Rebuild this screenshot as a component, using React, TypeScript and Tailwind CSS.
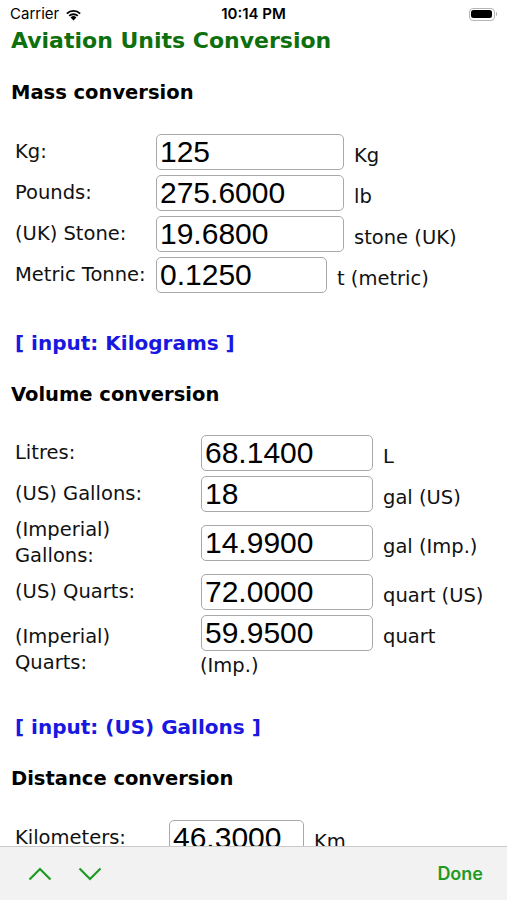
import React from 'react';

const labelFont = { fontFamily: '"DejaVu Sans", Verdana, sans-serif' };

type Row = {
  label: React.ReactNode;
  value: string;
  unit: React.ReactNode;
  inputW: string;
};

const Field = ({ value, w }: { value: string; w: string }) => (
  <input
    readOnly
    value={value}
    className={`${w} h-[36px] rounded-[5px] border border-[#a9a9a9] bg-white px-[3px] text-[30px] leading-[34px] text-black outline-none`}
    style={{ fontFamily: '"Liberation Sans", Arial, sans-serif' }}
  />
);

const Section = ({
  title,
  labelW,
  rows,
}: {
  title: string;
  labelW: string;
  rows: Row[];
}) => (
  <div>
    <h2 className="mt-[26px] text-[19.5px] font-bold leading-[26px] text-black">{title}</h2>
    <div className="mt-[28px] flex flex-col gap-[5px]">
      {rows.map((r, i) => (
        <div key={i} className="flex items-center">
          <div className={`${labelW} shrink-0 pl-[4px] text-[19.5px] leading-[26px] text-[#111]`}>
            {r.label}
          </div>
          <div className="flex items-baseline">
            <Field value={r.value} w={r.inputW} />
            <span className="ml-[10px] text-[19.5px] leading-[26px] text-[#111]">{r.unit}</span>
          </div>
        </div>
      ))}
    </div>
  </div>
);

const WifiIcon = () => (
  <svg width="17" height="13" viewBox="0 0 17 13">
    <path d="M8.5 12.5 L5.6 9.4 A4.2 4.2 0 0 1 11.4 9.4 Z" fill="#000" />
    <path d="M3.6 7.3 A7 7 0 0 1 13.4 7.3 L12.1 8.6 A5.2 5.2 0 0 0 4.9 8.6 Z" fill="#000" />
    <path d="M1.2 4.9 A10.4 10.4 0 0 1 15.8 4.9 L14.5 6.2 A8.6 8.6 0 0 0 2.5 6.2 Z" fill="#000" />
  </svg>
);

export default function App() {
  return (
    <div className="relative min-h-[900px] w-[507px] bg-white" style={labelFont}>
      {/* status bar */}
      <div
        className="flex h-[28px] items-center justify-between px-[10px] text-[15px] text-black"
        style={{ fontFamily: 'Inter, "Liberation Sans", sans-serif' }}
      >
        <div className="flex w-[120px] items-center gap-[6px]">
          <span>Carrier</span>
          <WifiIcon />
        </div>
        <span className="font-semibold">10:14 PM</span>
        <div className="flex w-[120px] justify-end">
          <div className="flex items-center">
            <div className="flex h-[13px] w-[26px] items-center rounded-[4px] border border-[#b5b5b5] p-[1.5px]">
              <div className="h-full w-full rounded-[2.5px] bg-black" />
            </div>
            <div className="ml-[1px] h-[4px] w-[1.5px] rounded-r-sm bg-[#b5b5b5]" />
          </div>
        </div>
      </div>

      <div className="px-[11px] pb-[80px]">
        <h1 className="text-[22px] font-bold leading-[26px] text-[#0d700d]">
          Aviation Units Conversion
        </h1>

        <Section
          title="Mass conversion"
          labelW="w-[145px]"
          rows={[
            { label: 'Kg:', value: '125', unit: 'Kg', inputW: 'w-[188px]' },
            { label: 'Pounds:', value: '275.6000', unit: 'lb', inputW: 'w-[188px]' },
            { label: '(UK) Stone:', value: '19.6800', unit: 'stone (UK)', inputW: 'w-[188px]' },
            { label: 'Metric Tonne:', value: '0.1250', unit: 't (metric)', inputW: 'w-[171px]' },
          ]}
        />

        <p className="mt-[37px] pl-[4px] text-[20px] font-bold leading-[26px] text-[#1818e0]">
          [ input: Kilograms ]
        </p>

        <div>
          <h2 className="mt-[26px] text-[19.5px] font-bold leading-[26px] text-black">
            Volume conversion
          </h2>
          <div className="mt-[27px] flex flex-col gap-[5px] text-[19.5px] leading-[26px] text-[#111]">
            <div className="flex items-center">
              <div className="w-[190px] shrink-0 pl-[4px]">Litres:</div>
              <div className="flex items-baseline">
                <Field value="68.1400" w="w-[172px]" />
                <span className="ml-[10px]">L</span>
              </div>
            </div>
            <div className="flex items-center">
              <div className="w-[190px] shrink-0 pl-[4px]">(US) Gallons:</div>
              <div className="flex items-baseline">
                <Field value="18" w="w-[172px]" />
                <span className="ml-[10px]">gal (US)</span>
              </div>
            </div>
            <div className="flex items-center">
              <div className="w-[190px] shrink-0 pl-[4px]">
                (Imperial)
                <br />
                Gallons:
              </div>
              <div className="flex items-baseline">
                <Field value="14.9900" w="w-[172px]" />
                <span className="ml-[10px]">gal (Imp.)</span>
              </div>
            </div>
            <div className="flex items-center">
              <div className="w-[190px] shrink-0 pl-[4px]">(US) Quarts:</div>
              <div className="flex items-baseline">
                <Field value="72.0000" w="w-[172px]" />
                <span className="ml-[10px]">quart (US)</span>
              </div>
            </div>
            <div className="flex items-start">
              <div className="mt-[9px] w-[189px] shrink-0 pl-[4px]">
                (Imperial)
                <br />
                Quarts:
              </div>
              <div className="flex flex-col">
                <div className="flex items-baseline pl-[1px]">
                  <Field value="59.9500" w="w-[172px]" />
                  <span className="ml-[10px]">quart</span>
                </div>
                <span className="mt-[2px]">(Imp.)</span>
              </div>
            </div>
          </div>
        </div>

        <p className="mt-[35px] pl-[4px] text-[20px] font-bold leading-[26px] text-[#1818e0]">
          [ input: (US) Gallons ]
        </p>

        <Section
          title="Distance conversion"
          labelW="w-[158px]"
          rows={[
            { label: 'Kilometers:', value: '46.3000', unit: 'Km', inputW: 'w-[135px]' },
            { label: 'Nautical Miles:', value: '25.0000', unit: 'NM', inputW: 'w-[135px]' },
          ]}
        />
      </div>

      {/* keyboard accessory toolbar */}
      <div
        className="fixed bottom-0 left-0 flex h-[54px] w-[507px] items-center justify-between border-t border-[#c9c9c9] bg-[#f2f2f2] pl-[28px] pr-[24px]"
        style={{ fontFamily: 'Inter, "Liberation Sans", sans-serif' }}
      >
        <div className="flex items-center gap-[26px]">
          <svg width="24" height="14" viewBox="0 0 24 14">
            <path d="M1.5 12.5 L12 2 L22.5 12.5" fill="none" stroke="#1f9a22" strokeWidth="2.2" />
          </svg>
          <svg width="24" height="14" viewBox="0 0 24 14">
            <path d="M1.5 1.5 L12 12 L22.5 1.5" fill="none" stroke="#1f9a22" strokeWidth="2.2" />
          </svg>
        </div>
        <span className="text-[18px] font-semibold text-[#1f9a22]">Done</span>
      </div>
    </div>
  );
}
